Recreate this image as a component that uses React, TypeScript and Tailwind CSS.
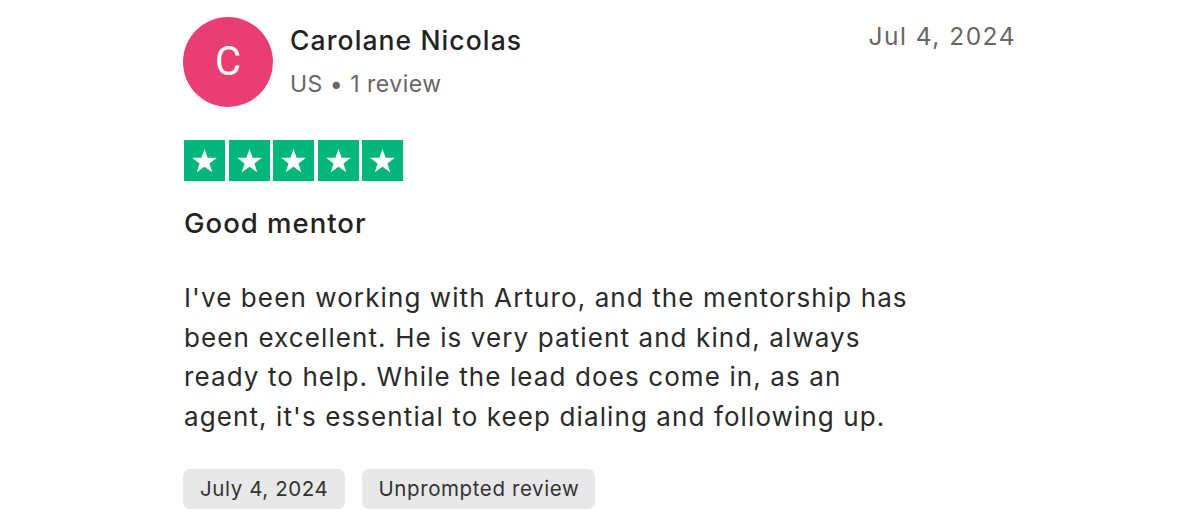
const Star = () => (
  <div className="w-[41px] h-[41px] bg-[#00b67a] flex items-center justify-center">
    <svg viewBox="0 0 24 24" className="w-[29px] h-[29px]" fill="white">
      <path d="M12 2.5l2.6 7.3h7.7l-6.2 4.6 2.3 7.4L12 17.2l-6.4 4.6 2.3-7.4-6.2-4.6h7.7z" />
    </svg>
  </div>
);

export default function App() {
  return (
    <div className="w-[1200px] h-[524px] bg-white font-['Inter',sans-serif] text-[#1a1a1a] overflow-hidden">
      <div className="ml-[183px] w-[833px] pt-[17px]">
        <div className="flex items-start">
          <div className="w-[90px] h-[90px] rounded-full bg-[#e83e74] flex items-center justify-center shrink-0">
            <span className="text-white text-[40px] font-['Roboto',sans-serif] leading-none">C</span>
          </div>
          <div className="ml-[17px] flex-1 pt-[7px]">
            <div className="text-[26.5px] font-medium leading-[32px] tracking-[1.1px] text-[#222]">Carolane Nicolas</div>
            <div className="text-[23px] leading-[32px] mt-[12px] tracking-[0.5px] text-[#666]">US • 1 review</div>
          </div>
          <div className="text-[24.5px] tracking-[1.5px] text-[#666] pt-[1px]">Jul 4, 2024</div>
        </div>
        <div className="mt-[33px] flex gap-[3.5px] ml-[1px]">
          <Star /><Star /><Star /><Star /><Star />
        </div>
        <div className="mt-[24px] text-[27.5px] font-medium leading-[36px] tracking-[1px] text-[#222] ml-[1px]">Good mentor</div>
        <p className="mt-[37px] text-[26px] leading-[39.5px] tracking-[1.1px] text-[#2a2a2a] w-[735px] ml-[1px]">
          I've been working with Arturo, and the mentorship has been excellent. He is very patient and kind, always ready to help. While the lead does come in, as an agent, it's essential to keep dialing and following up.
        </p>
        <div className="mt-[33px] flex gap-[17px]">
          <span className="h-[40px] px-[17px] flex items-center rounded-[7px] bg-[#e8e8e8] text-[20.5px] tracking-[0.6px] text-[#333]">July 4, 2024</span>
          <span className="h-[40px] px-[16px] flex items-center rounded-[7px] bg-[#e8e8e8] text-[20.5px] tracking-[0.6px] text-[#333]">Unprompted review</span>
        </div>
      </div>
    </div>
  );
}
